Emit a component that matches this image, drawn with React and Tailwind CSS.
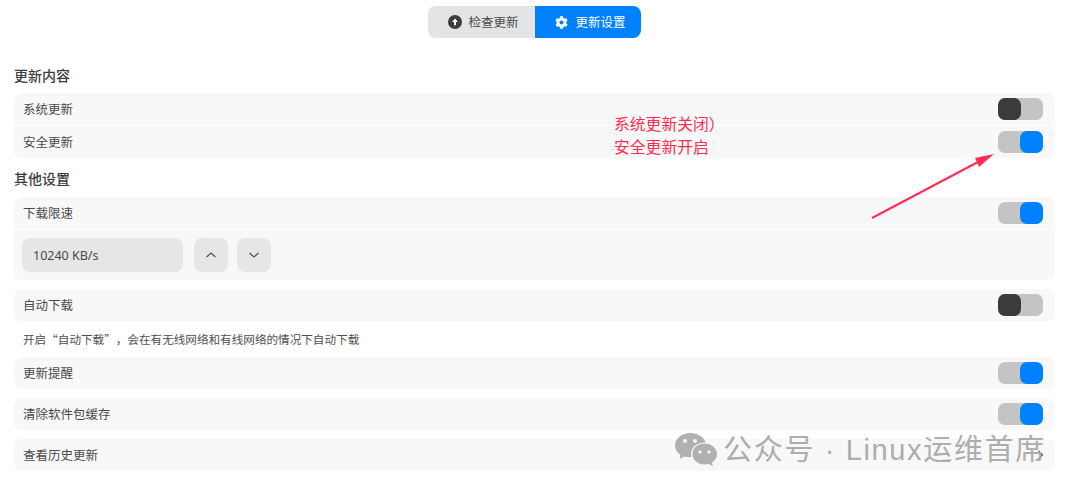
import React from "react";
import { FaCog } from "react-icons/fa";

function Toggle({ on }) {
  return (
    <div className="relative w-[45px] h-[22px] rounded-[7px] bg-[#c4c4c4] flex shrink-0">
      <div className={on ? "ml-auto w-[23px] h-[22px] rounded-[7px] bg-[#0081ff]" : "w-[23px] h-[22px] rounded-[7px] bg-[#3b3b3b]"} />
    </div>
  );
}

function Row({ label, on, rounded = "rounded-[8px]", children }) {
  return (
    <div className={`h-8 bg-[#f8f8f8] ${rounded} flex items-center justify-between pl-[9px] pr-3 text-[12.5px] text-[#4a4a4a]`}>
      <span>{label}</span>
      {children ?? <Toggle on={on} />}
    </div>
  );
}

function Stepper({ up }) {
  return (
    <div className="w-[34px] h-[34px] rounded-[8px] bg-[#e6e6e6] flex items-center justify-center">
      <svg width="12" height="8" viewBox="0 0 12 8" fill="none" stroke="#4d4d4d" strokeWidth="1.2">
        <path d={up ? "M1.5 6L6 2l4.5 4" : "M1.5 2L6 6l4.5-4"} />
      </svg>
    </div>
  );
}

export default function App() {
  return (
    <div className="relative w-[1080px] h-[493px] overflow-hidden bg-white font-['Noto_Sans_CJK_SC','Noto_Sans',sans-serif]">
      <div className="flex justify-center pt-[6px] pr-[12px]">
        <div className="flex h-[32px] w-[213px] rounded-[8px] overflow-hidden text-[12.5px]">
          <div className="w-[107px] bg-[#e4e4e4] text-[#4a4a4a] flex items-center justify-end pr-[16px] gap-[6px]">
            <svg width="14" height="14" viewBox="0 0 14 14">
              <circle cx="7" cy="7" r="7" fill="#3d3d3d" />
              <path d="M7 3.5L10 7H8v3.2H6V7H4z" fill="#fff" />
            </svg>
            <span>检查更新</span>
          </div>
          <div className="w-[106px] bg-[#0081ff] text-white flex items-center justify-end pr-[15px] gap-[7px]">
            <FaCog size={13} color="#fff" />
            <span>更新设置</span>
          </div>
        </div>
      </div>

      <div className="mx-[14px] w-[1041px]">
        <div className="mt-[28px] h-[18px] flex items-center text-[14px] font-medium text-[#3d3d3d]">更新内容</div>
        <div className="mt-[9px] flex flex-col gap-px">
          <Row label="系统更新" on={false} rounded="rounded-t-[8px]" />
          <Row label="安全更新" on rounded="rounded-b-[8px]" />
        </div>

        <div className="mt-[11px] h-[18px] flex items-center text-[14px] font-medium text-[#3d3d3d]">其他设置</div>
        <div className="mt-[10px] flex flex-col gap-px">
          <Row label="下载限速" on rounded="rounded-t-[8px]" />
          <div className="h-[50px] bg-[#f8f8f8] rounded-b-[8px] flex items-center pl-2">
            <div className="w-[161px] h-[34px] rounded-[8px] bg-[#e6e6e6] flex items-center pl-[11px] pt-[2px] text-[12.5px] text-[#4a4a4a] font-['Noto_Sans',sans-serif]">10240 KB/s</div>
            <div className="ml-[11px] flex gap-[9px]">
              <Stepper up />
              <Stepper />
            </div>
          </div>
        </div>

        <div className="mt-[9px]">
          <Row label="自动下载" on={false} />
        </div>
        <div className="h-[36px] flex items-center pl-[9px] pt-px text-[11.6px] text-[#4f4f4f] whitespace-nowrap [text-spacing-trim:space-all]">开启“自动下载”，会在有无线网络和有线网络的情况下自动下载</div>
        <Row label="更新提醒" on />
        <div className="mt-[9px]">
          <Row label="清除软件包缓存" on />
        </div>
        <div className="mt-[9px]">
          <Row
            label="查看历史更新"
            children={
              <svg width="7" height="10" viewBox="0 0 7 10" fill="none" stroke="#4d4d4d" strokeWidth="1.1" className="mr-[-1px]">
                <path d="M1.500 1L5.500 5l-4 4" />
              </svg>
            }
          />
        </div>
      </div>

      {/* annotation */}
      <div className="absolute left-[614px] top-[113px] text-[15.8px] leading-[22.5px] text-[#ff2d55] [text-spacing-trim:space-all]">
        <div>系统更新关闭）</div>
        <div>安全更新开启</div>
      </div>
      <svg className="absolute left-[865px] top-[148px]" width="135" height="78" viewBox="0 0 135 78" fill="none">
        <path d="M7 70L113 14" stroke="#ff2d55" strokeWidth="2" />
        <path d="M129 6L110 10l2 4 2 5z" fill="#ff2d55" />
      </svg>

      {/* watermark */}
      <div className="absolute left-[675px] top-[432px] flex items-center">
        <svg width="42" height="35" viewBox="0 0 42 35" className="opacity-90">
          <path d="M15 1C7 1 0 6.500 0 13.500c0 4 2.200 7.200 5.500 9.500L4.500 27l5-2.500c1.700.5 3.500.7 5.500.7.500 0 1 0 1.500-.1-.3-1-.5-2-.5-3.100C16 15.500 22 10.500 29.500 10.500h1.200C29 5 22.500 1 15 1z" fill="#a9a9a9" />
          <circle cx="10" cy="9" r="2" fill="#f4f4f4" />
          <circle cx="20" cy="9" r="2" fill="#f4f4f4" />
          <path d="M42 22c0-6-6-10.500-12.500-10.500S17.500 16 17.500 22s5.500 10.500 12 10.500c1.500 0 3-.2 4.200-.7L38 34.500 37 30.500c3-2 5-5 5-8.500z" fill="#a9a9a9" />
          <circle cx="25" cy="20" r="1.700" fill="#f4f4f4" />
          <circle cx="34" cy="20" r="1.700" fill="#f4f4f4" />
        </svg>
        <span className="ml-[6px] relative top-px text-[29px] leading-[35px] tracking-[1.65px] text-[#adadad] font-['Liberation_Sans','Noto_Sans_CJK_SC',sans-serif] whitespace-nowrap">公众号 · Linux运维首席</span>
      </div>
    </div>
  );
}
